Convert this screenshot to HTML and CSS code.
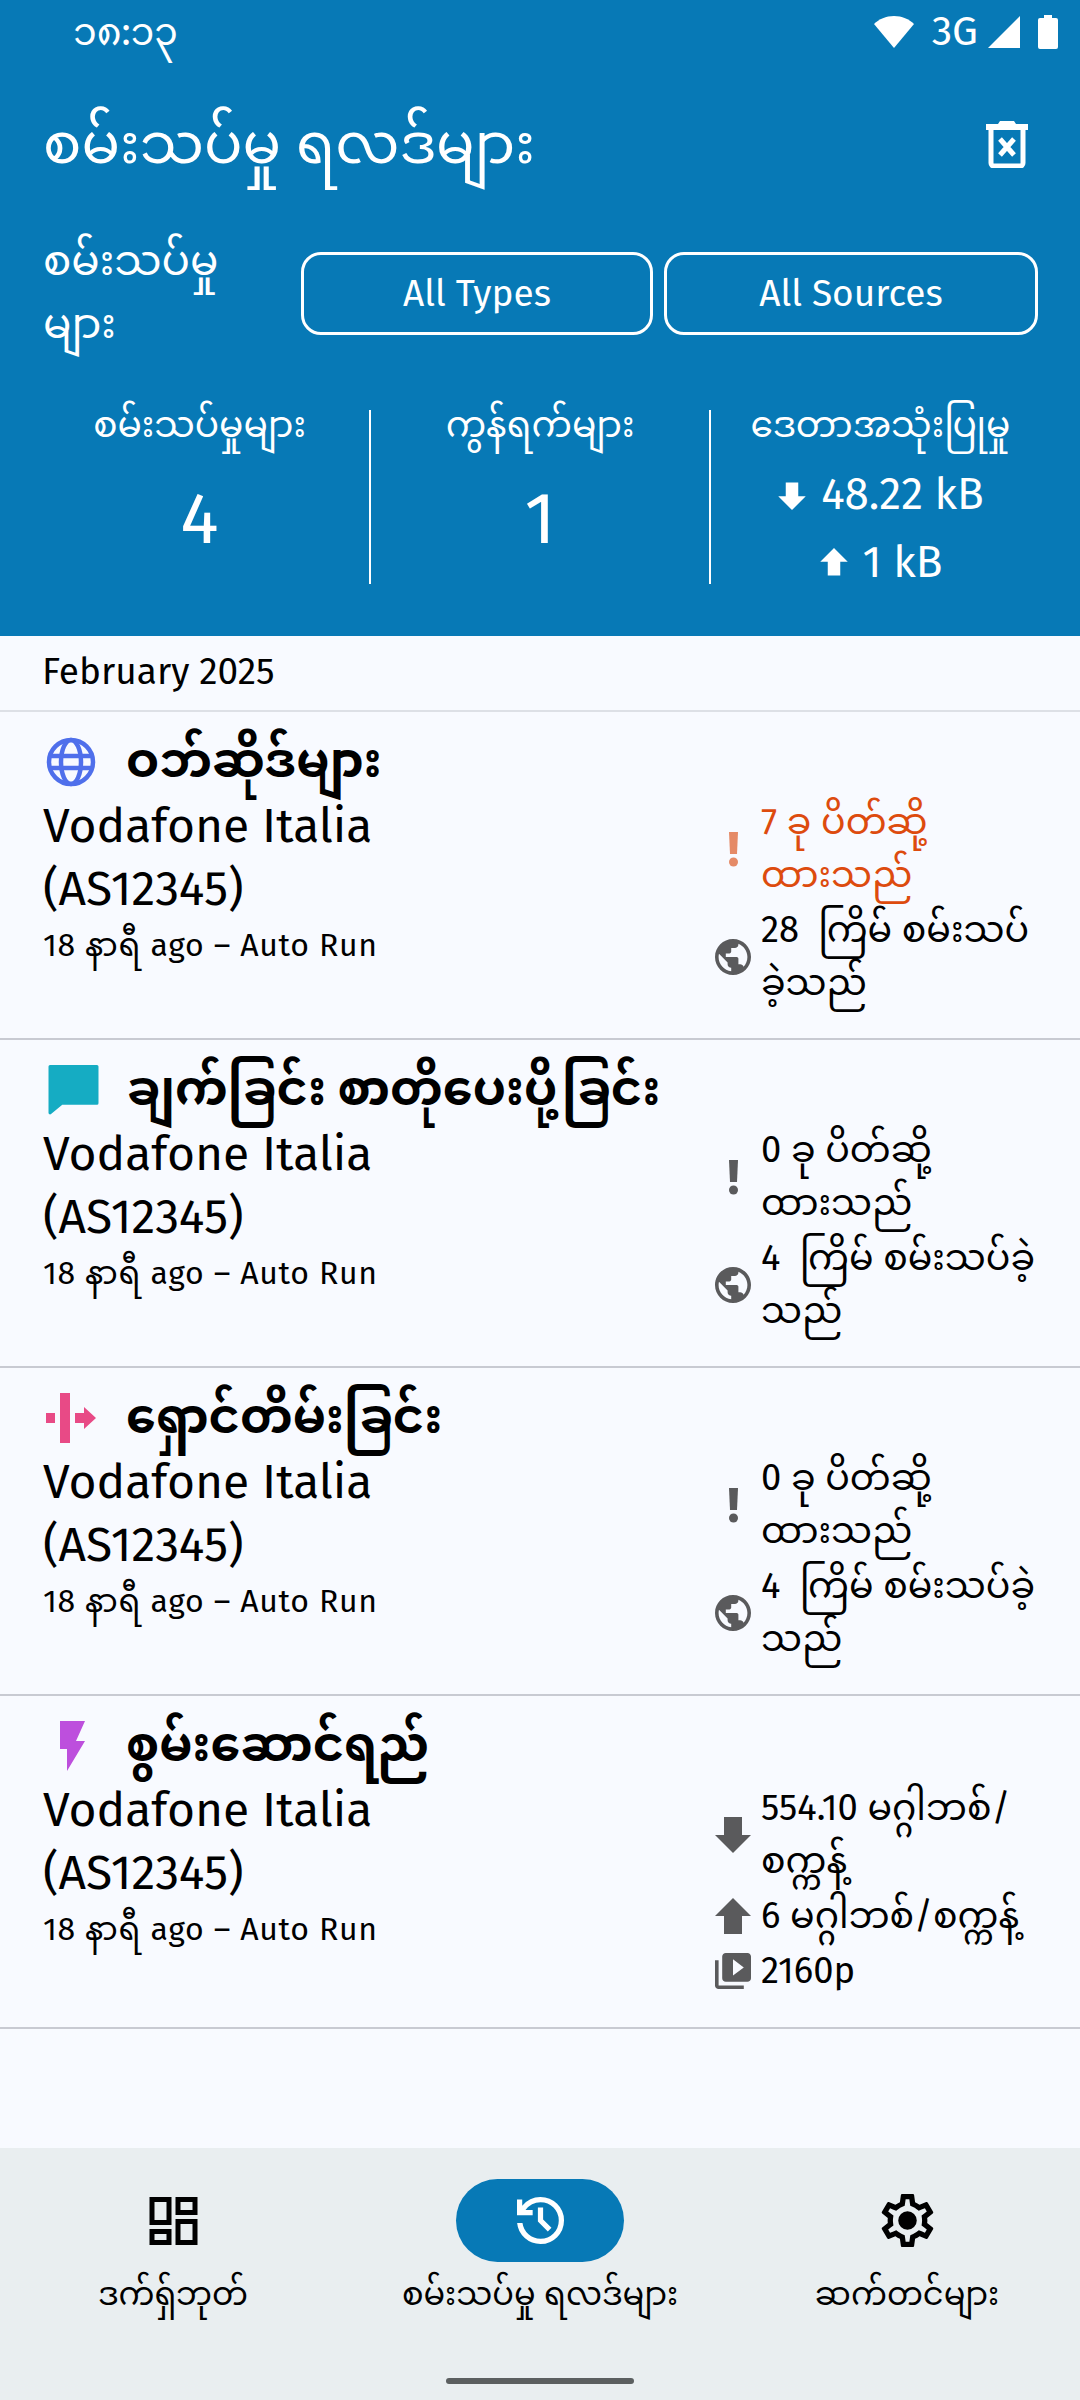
FILE: index.html
```html
<!DOCTYPE html>
<html lang="my">
<head>
<meta charset="utf-8">
<title>Test Results</title>
<link rel="stylesheet" href="styles.css">
</head>
<body>
<div class="app">
  <header class="header">
    <div class="status">
      <span class="time">၁၈:၁၃</span>
      <div class="status-icons">
        <svg class="wifi" viewBox="0 0 40 32"><path d="M20 32 0 8C5 3 12 0 20 0s15 3 20 8z"/></svg>
        <span class="net">3G</span>
        <svg class="signal" viewBox="0 0 32 32"><path d="M32 0v32H0z"/></svg>
        <svg class="battery" viewBox="0 0 20 34"><path d="M6 0h8v3h4a2 2 0 0 1 2 2v27a2 2 0 0 1-2 2H2a2 2 0 0 1-2-2V5a2 2 0 0 1 2-2h4z"/></svg>
      </div>
    </div>
    <div class="title-row">
      <h1 class="title">စမ်းသပ်မှု ရလဒ်များ</h1>
      <svg class="trash" viewBox="0 0 44 48"><path class="trash-line" d="M6 10v33a3 3 0 0 0 3 3h26a3 3 0 0 0 3-3V10"/><path d="M1 4h12l2-3h14l2 3h12v6H1z"/><path class="trash-x" d="m15 19 14 16m0-16L15 35"/></svg>
    </div>
    <div class="filter-row">
      <div class="filter-label">စမ်းသပ်မှု များ</div>
      <button class="filter filter-types">All Types</button>
      <button class="filter filter-sources">All Sources</button>
    </div>
    <div class="stats">
      <div class="stat stat-first">
        <div class="stat-label">စမ်းသပ်မှုများ</div>
        <div class="stat-num">4</div>
      </div>
      <div class="stat stat-mid">
        <div class="stat-label">ကွန်ရက်များ</div>
        <div class="stat-num">1</div>
      </div>
      <div class="stat stat-last">
        <div class="stat-label">ဒေတာအသုံးပြုမှု</div>
        <div class="data-line data-down"><svg class="arrow" viewBox="0 0 24 24"><path d="M7 2h10v11h6L12 24 1 13h6z"/></svg>48.22 kB</div>
        <div class="data-line"><svg class="arrow" viewBox="0 0 24 24"><path d="M7 22h10V11h6L12 0 1 11h6z"/></svg>1 kB</div>
      </div>
    </div>
  </header>

  <div class="month">February 2025</div>

  <section class="row">
    <div class="left">
      <div class="test-name">
        <svg class="test-icon globe" viewBox="0 0 50 50"><circle cx="25" cy="25" r="22"/><ellipse cx="25" cy="25" rx="10" ry="22"/><path d="M3 19h44M3 31h44"/></svg>
        <h2 class="name">ဝဘ်ဆိုဒ်များ</h2>
      </div>
      <div class="asn">Vodafone Italia<br>(AS12345)</div>
      <div class="when">18 နာရီ ago – Auto Run</div>
    </div>
    <div class="right">
      <div class="fact fact-alert">
        <svg class="fact-icon alert-icon" viewBox="0 0 36 36"><path d="M14 1h9l-1 22h-7z"/><circle cx="18.500" cy="31" r="4.500"/></svg>
        <span>7 ခု ပိတ်ဆို့ထားသည်</span>
      </div>
      <div class="fact">
        <svg class="fact-icon grey-icon" viewBox="2 2 20 20"><path d="M12 2C6.480 2 2 6.480 2 12s4.480 10 10 10 10-4.480 10-10S17.520 2 12 2zm-1 17.930c-3.950-.490-7-3.850-7-7.930 0-.620.080-1.210.210-1.790L9 15v1c0 1.100.900 2 2 2v1.930zm6.900-2.540c-.260-.810-1-1.390-1.900-1.390h-1v-3c0-.550-.450-1-1-1H8v-2h2c.550 0 1-.450 1-1V7h2c1.100 0 2-.900 2-2v-.410c2.930 1.190 5 4.060 5 7.410 0 2.080-.800 3.970-2.100 5.390z"/></svg>
        <span>28 &nbsp;ကြိမ် စမ်းသပ်ခဲ့သည်</span>
      </div>
    </div>
  </section>

  <section class="row">
    <div class="left">
      <div class="test-name">
        <svg class="test-icon chat-icon" viewBox="0 1 50 49"><path fill="#15ACC3" d="M2 1h46a1.500 1.500 0 0 1 1.500 1.500v36a1.500 1.500 0 0 1-1.500 1.500H14L3 49a1.500 1.500 0 0 1-2.500-1V2.500A1.500 1.500 0 0 1 2 1z"/></svg>
        <h2 class="name">ချက်ခြင်း စာတိုပေးပို့ခြင်း</h2>
      </div>
      <div class="asn">Vodafone Italia<br>(AS12345)</div>
      <div class="when">18 နာရီ ago – Auto Run</div>
    </div>
    <div class="right">
      <div class="fact">
        <svg class="fact-icon grey-icon" viewBox="0 0 36 36"><path d="M14 1h9l-1 22h-7z"/><circle cx="18.500" cy="31" r="4.500"/></svg>
        <span>0 ခု ပိတ်ဆို့ထားသည်</span>
      </div>
      <div class="fact">
        <svg class="fact-icon grey-icon" viewBox="2 2 20 20"><path d="M12 2C6.480 2 2 6.480 2 12s4.480 10 10 10 10-4.480 10-10S17.520 2 12 2zm-1 17.930c-3.950-.490-7-3.850-7-7.930 0-.620.080-1.210.210-1.790L9 15v1c0 1.100.900 2 2 2v1.930zm6.900-2.540c-.260-.810-1-1.390-1.900-1.390h-1v-3c0-.550-.450-1-1-1H8v-2h2c.550 0 1-.450 1-1V7h2c1.100 0 2-.900 2-2v-.410c2.930 1.190 5 4.060 5 7.410 0 2.080-.800 3.970-2.100 5.390z"/></svg>
        <span>4 &nbsp;ကြိမ် စမ်းသပ်ခဲ့သည်</span>
      </div>
    </div>
  </section>

  <section class="row">
    <div class="left">
      <div class="test-name">
        <svg class="test-icon" viewBox="0 0 50 50"><path fill="#E84A86" d="M0 20h9v10H0zM14 0h10v50H14zM29 20h9v-6l12 11-12 11v-6h-9z"/></svg>
        <h2 class="name">ရှောင်တိမ်းခြင်း</h2>
      </div>
      <div class="asn">Vodafone Italia<br>(AS12345)</div>
      <div class="when">18 နာရီ ago – Auto Run</div>
    </div>
    <div class="right">
      <div class="fact">
        <svg class="fact-icon grey-icon" viewBox="0 0 36 36"><path d="M14 1h9l-1 22h-7z"/><circle cx="18.500" cy="31" r="4.500"/></svg>
        <span>0 ခု ပိတ်ဆို့ထားသည်</span>
      </div>
      <div class="fact">
        <svg class="fact-icon grey-icon" viewBox="2 2 20 20"><path d="M12 2C6.480 2 2 6.480 2 12s4.480 10 10 10 10-4.480 10-10S17.520 2 12 2zm-1 17.930c-3.950-.490-7-3.850-7-7.930 0-.620.080-1.210.210-1.790L9 15v1c0 1.100.900 2 2 2v1.930zm6.900-2.540c-.260-.810-1-1.390-1.900-1.390h-1v-3c0-.550-.450-1-1-1H8v-2h2c.550 0 1-.450 1-1V7h2c1.100 0 2-.900 2-2v-.410c2.930 1.190 5 4.060 5 7.410 0 2.080-.800 3.970-2.100 5.390z"/></svg>
        <span>4 &nbsp;ကြိမ် စမ်းသပ်ခဲ့သည်</span>
      </div>
    </div>
  </section>

  <section class="row row-perf">
    <div class="left">
      <div class="test-name">
        <svg class="test-icon" viewBox="0 0 50 50"><path fill="#BD4FDD" d="M14 0h25l-9 20h9L21 50V28h-7z"/></svg>
        <h2 class="name">စွမ်းဆောင်ရည်</h2>
      </div>
      <div class="asn">Vodafone Italia<br>(AS12345)</div>
      <div class="when">18 နာရီ ago – Auto Run</div>
    </div>
    <div class="right">
      <div class="fact">
        <svg class="fact-icon grey-icon" viewBox="0 0 36 36"><path d="M9 0h18v18h9L18 36 0 18h9z"/></svg>
        <span>554.10 မဂ္ဂါဘစ်/စက္ကန့်</span>
      </div>
      <div class="fact">
        <svg class="fact-icon grey-icon" viewBox="0 0 36 36"><path d="M9 36h18V18h9L18 0 0 18h9z"/></svg>
        <span>6 မဂ္ဂါဘစ်/စက္ကန့်</span>
      </div>
      <div class="fact">
        <svg class="fact-icon grey-icon" viewBox="2 2 20 20"><path d="M4 6H2v14c0 1.100.900 2 2 2h14v-2H4V6zm16-4H8c-1.100 0-2 .900-2 2v12c0 1.100.900 2 2 2h12c1.100 0 2-.900 2-2V4c0-1.100-.900-2-2-2zm-8 12.500v-9l6 4.500-6 4.500z"/></svg>
        <span>2160p</span>
      </div>
    </div>
  </section>

  <div class="spacer"></div>

  <nav class="nav">
    <div class="nav-item">
      <div class="nav-icon">
        <svg class="nav-svg nav-dash" viewBox="0 0 48 48"><path fill-rule="evenodd" d="M0 0h22v28H0zm5 5v18h12V5zM26 0h22v18H26zm5 5v8h12V5zM26 22h22v26H26zm5 5v16h12V27zM0 32h22v16H0zm5 5v6h12v-6z"/></svg>
      </div>
      <span class="nav-label">ဒက်ရှ်ဘုတ်</span>
    </div>
    <div class="nav-item">
      <div class="nav-icon nav-active">
        <svg class="nav-svg nav-history" viewBox="3 3 18 18"><path d="M12 21q-3.450 0-6.040-2.290T3.050 13H5.100q.350 2.600 2.310 4.300T12 19q2.930 0 4.960-2.040T19 12q0-2.930-2.040-4.960T12 5q-1.730 0-3.230.800T6.250 8H9v2H3V4h2v2.350q1.270-1.600 3.110-2.480T12 3q3.750 0 6.380 2.630T21 12q0 3.750-2.630 6.380T12 21zm2.800-4.800L11 12.400V7h2v4.600l3.200 3.200-1.400 1.400z"/></svg>
      </div>
      <span class="nav-label">စမ်းသပ်မှု ရလဒ်များ</span>
    </div>
    <div class="nav-item">
      <div class="nav-icon">
        <svg class="nav-svg nav-gear" viewBox="2 2 20 20"><path d="M19.430 12.980c.040-.320.070-.640.070-.980 0-.340-.030-.660-.070-.980l2.110-1.650c.190-.150.240-.420.120-.640l-2-3.460c-.090-.160-.260-.250-.440-.250-.060 0-.120.010-.170.030l-2.490 1c-.520-.400-1.080-.730-1.690-.980l-.380-2.650C14.460 2.180 14.250 2 14 2h-4c-.250 0-.460.180-.490.420l-.380 2.650c-.610.250-1.170.590-1.690.980l-2.490-1c-.060-.020-.120-.030-.180-.030-.170 0-.340.090-.430.250l-2 3.460c-.130.220-.070.490.120.640l2.110 1.650c-.040.320-.070.650-.070.980 0 .330.030.660.070.980l-2.110 1.650c-.190.150-.240.420-.120.640l2 3.460c.090.160.260.250.440.250.060 0 .120-.010.170-.030l2.490-1c.520.400 1.080.730 1.690.980l.380 2.650c.030.240.240.420.490.420h4c.250 0 .460-.180.490-.420l.380-2.650c.610-.250 1.170-.590 1.690-.980l2.490 1c.060.020.120.030.180.030.170 0 .340-.090.430-.250l2-3.460c.120-.220.070-.490-.120-.640l-2.110-1.650zm-1.980-1.710c.040.310.050.520.050.730 0 .210-.020.430-.050.730l-.140 1.130.890.700 1.080.840-.700 1.210-1.270-.510-1.040-.420-.900.680c-.430.320-.840.560-1.250.730l-1.060.430-.160 1.130-.200 1.350h-1.400l-.190-1.350-.160-1.130-1.060-.430c-.430-.180-.830-.410-1.230-.710l-.910-.700-1.060.430-1.270.510-.700-1.210 1.080-.840.890-.700-.140-1.130c-.030-.310-.050-.540-.050-.740s.020-.430.050-.730l.140-1.130-.890-.700-1.080-.840.700-1.210 1.270.510 1.040.420.900-.680c.430-.320.840-.560 1.250-.730l1.060-.430.160-1.130.200-1.350h1.390l.190 1.350.160 1.130 1.060.430c.430.180.830.410 1.230.710l.910.700 1.060-.430 1.270-.510.700 1.210-1.070.850-.890.700.140 1.130zM12 8.500a3.500 3.500 0 1 1 0 7 3.500 3.500 0 0 1 0-7z"/></svg>
      </div>
      <span class="nav-label">ဆက်တင်များ</span>
    </div>
    <div class="home-bar"></div>
  </nav>
</div>
</body>
</html>
```
FILE: styles.css
```css
* { box-sizing: border-box; }
html, body { margin: 0; padding: 0; }
body {
  width: 1080px;
  height: 2400px;
  font-family: "Fira Sans", "Noto Sans", "Noto Sans Myanmar", "Open Sans", sans-serif;
  color: #000;
  background: #F8FAFF;
  overflow: hidden;
}
.app { display: flex; flex-direction: column; height: 2400px; }

.header { background: #0779B6; color: #fff; height: 636px; flex: none; }
.status { display: flex; justify-content: space-between; align-items: center; height: 64px; padding: 0 22px 0 73px; }
.time { font-size: 38px; line-height: 40px; }
.status-icons { display: flex; align-items: center; }
.status-icons svg { fill: #fff; display: block; }
.wifi { width: 40px; height: 32px; margin-right: 18px; }
.net { font-size: 41px; line-height: 40px; margin-right: 10px; }
.signal { width: 32px; height: 32px; margin-right: 18px; }
.battery { width: 20px; height: 34px; }

.title-row { display: flex; justify-content: space-between; align-items: center; height: 100px; padding: 0 51px 0 43px; margin-top: 30px; }
.title { margin: 0; font-size: 57px; font-weight: 400; line-height: 70px; }
.trash { width: 44px; height: 48px; fill: #fff; }
.trash-line, .trash-x { fill: none; stroke: #fff; stroke-width: 5; }

.filter-row { display: flex; align-items: center; padding: 0 42px 0 43px; margin-top: 49px; height: 100px; }
.filter-label { width: 258px; flex: none; font-size: 42px; line-height: 63px; padding-right: 60px; }
.filter { height: 83px; background: transparent; color: #fff; border: 3px solid #fff; border-radius: 20px; font: inherit; font-size: 37px; }
.filter-types { width: 352px; margin-right: 11px; }
.filter-sources { flex: 1; }

.stats { display: flex; margin-top: 67px; height: 174px; }
.stat { text-align: center; height: 174px; }
.stat-first { width: 371px; padding-left: 30px; border-right: 2px solid #fff; }
.stat-mid { width: 340px; border-right: 2px solid #fff; }
.stat-last { flex: 1; padding-right: 30px; }
.stat-label { font-size: 36px; line-height: 24px; padding-top: 3px; height: 27px; }
.stat-num { font-size: 72px; line-height: 80px; margin-top: 42px; }
.data-line { display: flex; align-items: center; justify-content: center; font-size: 44px; line-height: 68px; }
.data-down { margin-top: 24px; }
.arrow { width: 30px; height: 30px; fill: #fff; margin-right: 14px; }

.month { height: 76px; flex: none; border-bottom: 2px solid #DDE0E6; font-size: 37px; line-height: 72px; padding-left: 42px; }

.row { display: flex; height: 328px; flex: none; border-bottom: 2px solid #C8CAD2; padding-left: 43px; }
.row-perf { height: 333px; }
.left { width: 670px; flex: none; padding-top: 18px; }
.test-name { display: flex; align-items: center; height: 64px; }
.test-icon { width: 50px; height: 50px; flex: none; margin: 0 30px 0 3px; }
.chat-icon { width: 51px; margin: 0 28px 0 5px; }
.globe { fill: none; stroke: #4F6FEB; stroke-width: 4.500; }
.name { margin: 0; font-size: 47.500px; font-weight: 700; line-height: 64px; white-space: nowrap; }
.asn { font-size: 48px; line-height: 63px; padding-top: 1px; }
.when { font-size: 32px; line-height: 42px; letter-spacing: 0.7px; margin-top: 3px; }
.right { flex: 1; display: flex; flex-direction: column; justify-content: center; gap: 2px; padding: 56px 30px 0 0; margin-left: 2px; }
.fact { display: flex; align-items: center; font-size: 36.400px; line-height: 53px; }
.fact-icon { width: 36px; height: 36px; flex: none; margin-right: 10px; }
.fact-alert { color: #DD4B0E; }
.alert-icon { fill: #E58A67; }
.grey-icon { fill: #5a5a5c; }

.spacer { flex: 1; }

.nav { position: relative; flex: none; height: 252px; background: #E9EEF0; display: grid; grid-template-columns: repeat(3, 367px); justify-content: center; padding-top: 31px; }
.nav-item { display: flex; flex-direction: column; align-items: center; }
.nav-icon { width: 168px; height: 83px; display: flex; align-items: center; justify-content: center; border-radius: 42px; }
.nav-active { background: #0779B6; }
.nav-svg { fill: #000; }
.nav-dash { width: 49px; height: 48px; }
.nav-history { width: 47px; height: 47px; fill: #fff; }
.nav-gear { width: 53px; height: 53px; }
.nav-label { font-size: 32px; line-height: 48px; margin-top: 8px; white-space: nowrap; }
.home-bar { position: absolute; left: 446px; bottom: 16px; width: 188px; height: 6px; border-radius: 3px; background: #5B5F60; }
```
